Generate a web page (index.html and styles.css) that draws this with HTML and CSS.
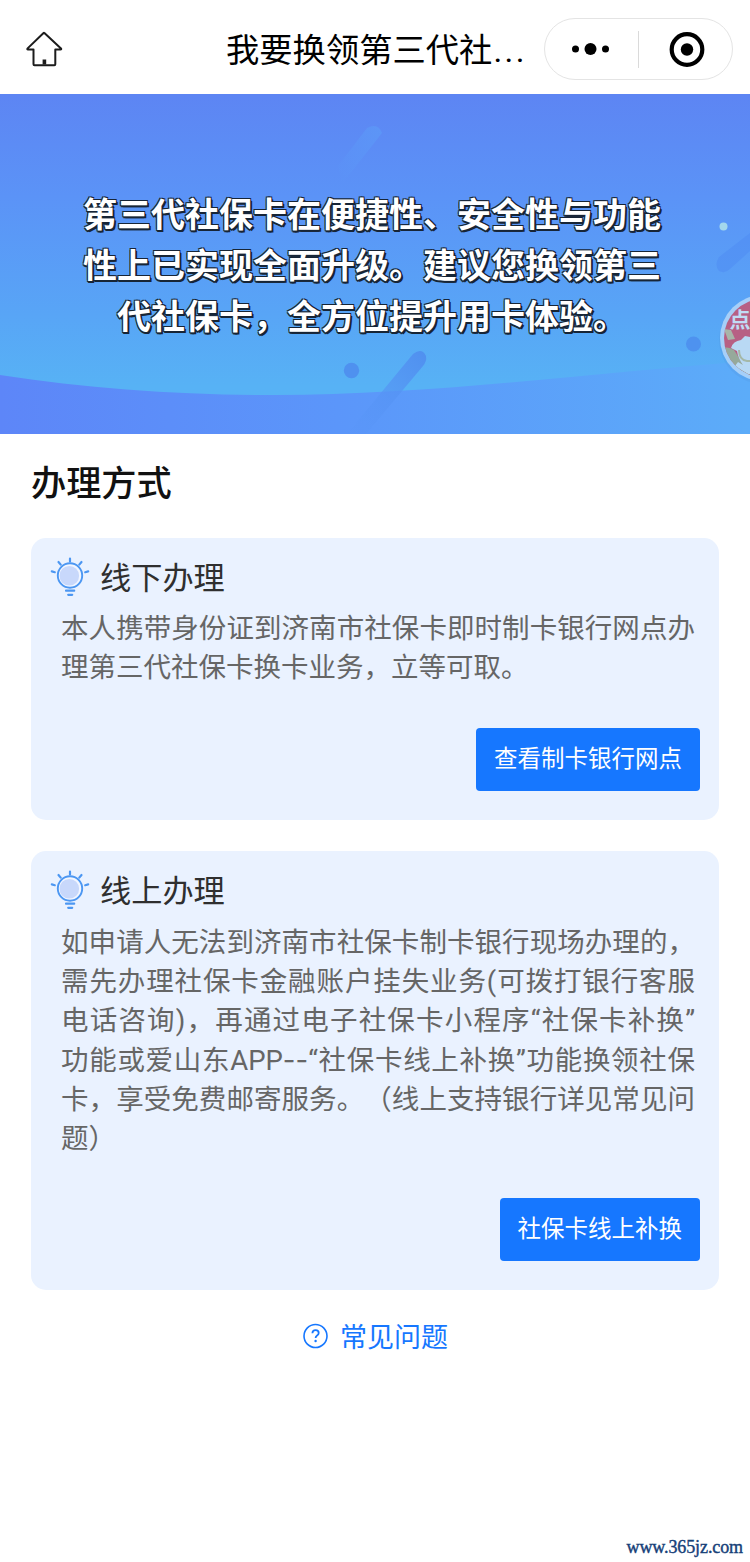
FILE: index.html
```html
<!DOCTYPE html>
<html lang="zh-CN">
<head>
<meta charset="utf-8">
<title>我要换领第三代社保卡</title>
<link rel="stylesheet" href="styles.css">
</head>
<body>
<svg class="defs" width="0" height="0" aria-hidden="true">
  <symbol id="bulb" viewBox="0 0 40 40">
    <circle cx="20" cy="18.500" r="12.200" fill="#f2f6ff" stroke="#4c97f2" stroke-width="1.900"/>
    <circle cx="19.300" cy="18.800" r="9.800" fill="#c8d8fb"/>
    <path d="M20 1.500v3M8.500 5l2.200 2.600M31.500 5l-2.200 2.600M1.800 14.400l3 .8M38.200 14.400l-3 .8M16 33.700h8.200M18.200 37.800h4" fill="none" stroke="#4c97f2" stroke-width="2.200" stroke-linecap="round"/>
  </symbol>
</svg>
<header class="navbar">
  <svg class="home" width="38" height="38" viewBox="0 0 38 38" fill="none" stroke="#1c1c1c" stroke-width="2" stroke-linejoin="round" stroke-linecap="round">
    <path d="M19.400 3L36 18.500c.5.6.2 1-.5 1h-5.200v14.800q0 1-1 1H9.500q-1 0-1-1V19.500H3c-.8 0-1-.5-.4-1.100L18.300 3.300q.6-.6 1.100-.3z"/>
    <path d="M19.400 29.500v5" stroke-width="3.600" stroke-linecap="butt"/>
  </svg>
  <h1 class="title">我要换领第三代社<span class="ellipsis">...</span></h1>
  <div class="capsule">
    <svg width="94" height="61" viewBox="0 0 94 61"><circle cx="30.500" cy="30" r="3.500"/><circle cx="45.500" cy="30" r="6"/><circle cx="60.500" cy="30" r="3.500"/></svg>
    <span class="divider"></span>
    <svg width="93" height="61" viewBox="0 0 93 61"><circle cx="48" cy="30.500" r="15.300" fill="none" stroke="#000" stroke-width="4.200"/><circle cx="48" cy="30.500" r="6.200"/></svg>
  </div>
</header>
<section class="banner">
  <svg class="art" width="750" height="340" viewBox="0 0 750 340">
    <defs>
      <linearGradient id="sky" x1="0" y1="0" x2="0" y2="1"><stop offset="0" stop-color="#5d85f3"/><stop offset=".3" stop-color="#5b93f7"/><stop offset=".65" stop-color="#58a5f6"/><stop offset=".86" stop-color="#57b2f5"/><stop offset="1" stop-color="#57b4f5"/></linearGradient>
      <linearGradient id="wave" x1="0" y1="0" x2="1" y2="0"><stop offset="0" stop-color="#5d86f8"/><stop offset=".45" stop-color="#5b96fa"/><stop offset="1" stop-color="#5cacf9"/></linearGradient>
      <linearGradient id="bar" x1="1" y1="0" x2="0" y2="1"><stop offset="0" stop-color="#5090ef"/><stop offset="1" stop-color="#5a96f9" stop-opacity=".3"/></linearGradient>
      <linearGradient id="glow" x1="1" y1="0" x2="0" y2="1"><stop offset="0" stop-color="#5ca4fa" stop-opacity=".45"/><stop offset="1" stop-color="#5ca4fa" stop-opacity="0"/></linearGradient>
    </defs>
    <rect width="750" height="340" fill="url(#sky)"/>
    <path d="M0 281C90 295 180 301 275 301C430 301 590 279 750 267V340H0z" fill="url(#wave)"/>
    <path d="M338 72L367 34Q378 28 382 39L342 90z" fill="url(#glow)"/>
    <path d="M347 340L413 260Q422 253 426 262Q427 267 423 272L366 340z" fill="url(#bar)"/>
    <path d="M750 139L719 163Q714 171 719 177Q725 180 730 175L750 157z" fill="#508ef3" opacity=".6"/>
    <circle cx="351.500" cy="276.500" r="7.700" fill="#4f91ef"/>
    <circle cx="693.500" cy="250" r="7.500" fill="#4e92ef"/>
    <circle cx="723.500" cy="132.500" r="4" fill="#a3d7ec"/>
  </svg>
  <p class="slogan">第三代社保卡在便捷性、安全性与功能<br>性上已实现全面升级。建议您换领第三<br>代社保卡，全方位提升用卡体验。</p>
  <svg class="float" width="36" height="96" viewBox="0 0 36 96">
    <defs><clipPath id="disc"><circle cx="49" cy="48" r="39"/></clipPath></defs>
    <circle cx="49" cy="50" r="44" fill="#4779bd" opacity=".1"/>
    <circle cx="49" cy="48" r="43" fill="#a6cff8"/>
    <g clip-path="url(#disc)">
      <rect width="90" height="96" fill="#b76084"/>
      <path d="M5 60q8-5 15 0l16 25H5z" fill="#96a99b"/>
      <path d="M10 39l7 1 4 9-7 1z" fill="#a8b5a8"/>
      <path d="M17 58q2-7 10-8l4-4 9 2v36h-6l-13-8 3-4 5 3q-5-7-6-14z" fill="#b9d9f4"/>
      <path d="M25 60q0 10 8 11h7" fill="none" stroke="#a5b8a8" stroke-width="2"/>
      <text class="float-text" x="15.500" y="37">点</text>
    </g>
  </svg>
</section>
<main class="content">
  <h2 class="heading">办理方式</h2>
  <section class="card offline">
    <h3 class="card-title"><svg width="40" height="40"><use href="#bulb"/></svg><span>线下办理</span></h3>
    <p class="text"><span class="line full">本人携带身份证到济南市社保卡即时制卡银行网点办</span><span class="line">理第三代社保卡换卡业务，立等可取。</span></p>
    <button class="button">查看制卡银行网点</button>
  </section>
  <section class="card online">
    <h3 class="card-title"><svg width="40" height="40"><use href="#bulb"/></svg><span>线上办理</span></h3>
    <p class="text"><span class="line full">如申请人无法到济南市社保卡制卡银行现场办理的，</span><span class="line full">需先办理社保卡金融账户挂失业务(可拨打银行客服</span><span class="line full">电话咨询)，再通过电子社保卡小程序“社保卡补换”</span><span class="line full">功能或爱山东APP<span class="dash">--</span>“社保卡线上补换”功能换领社保</span><span class="line full">卡，享受免费邮寄服务。（线上支持银行详见常见问</span><span class="line">题）</span></p>
    <button class="button">社保卡线上补换</button>
  </section>
  <a class="faq"><svg width="26" height="26" viewBox="0 0 26 26" fill="none" stroke="#1677ff" stroke-width="1.600"><circle cx="13.500" cy="13" r="11.500"/><path d="M10.400 10.300q.1-3.200 3.200-3.200t3.100 2.800q0 1.400-1.600 2.500-1.500 1-1.500 2.600" stroke-width="1.800"/><circle cx="13.600" cy="18" r="1.200" fill="#1677ff" stroke="none"/></svg><span>常见问题</span></a>
</main>
<footer class="watermark">www.365jz.com</footer>
</body>
</html>
```
FILE: styles.css
```css
* { box-sizing: border-box; }
body {
  margin: 0;
  width: 750px;
  height: 1562px;
  display: flex;
  flex-direction: column;
  overflow: hidden;
  background: #fff;
  font-family: Roboto, "Noto Sans CJK SC", sans-serif;
  text-spacing-trim: space-all;
}
h1, h2, h3, p { margin: 0; font-weight: 400; }
svg { display: block; flex: none; }
.defs { position: absolute; }
.navbar {
  height: 94px;
  flex: none;
  display: flex;
  align-items: center;
  padding: 4px 17px 0 25px;
}
.title {
  margin-left: 163px;
  width: 318px;
  padding-top: 3px;
  font-size: 33.300px;
  line-height: 48px;
  white-space: nowrap;
  color: #000;
}
.ellipsis { margin-left: 1px; letter-spacing: 2.400px; }
.capsule {
  width: 189px;
  height: 62px;
  border: 1px solid #e4e4e4;
  border-radius: 31px;
  display: flex;
  align-items: center;
}
.divider { width: 1px; height: 37px; background: #dadada; flex: none; }
.capsule svg { margin-right: -1px; }
.banner { position: relative; height: 340px; flex: none; overflow: hidden; padding-top: 93px; }
.art { position: absolute; left: 0; top: 0; }
.slogan {
  position: relative;
  width: 744px;
  text-align: center;
  font: 700 34px/51px "Noto Sans CJK SC", sans-serif;
  color: #fff;
  text-shadow: -1px -1px 0 #172536, 1px -1px 0 #172536, -1px 1px 0 #172536, 1px 1px 0 #172536, 2px 2px 0 #172536, 0 2px 0 #172536;
}
.float { position: absolute; right: 0; top: 196px; }
.float-text { font: 700 21px "Noto Sans CJK SC", sans-serif; fill: #c1dcf5; }
.content { padding: 0 31px; display: flex; flex-direction: column; }
.heading { padding-top: 25px; height: 104px; font-size: 35.200px; line-height: 50px; font-weight: 500; color: #111; }
.card {
  display: flex;
  flex-direction: column;
  padding: 19px 19px 29px;
  background: #eaf2ff;
  border-radius: 15px;
}
.offline { height: 282px; }
.online { height: 439px; margin-top: 31px; }
.card-title {
  display: flex;
  align-items: center;
  gap: 10px;
  height: 40px;
  font-size: 31.200px;
  line-height: 40px;
  color: #2f2f2f;
}
.card-title span, .faq span { padding-top: 3px; }
.text { margin: 12px 5px 0 11px; font-size: 27.500px; line-height: 39.200px; color: #666; }
.online .text { margin-top: 13px; }
.line { display: block; white-space: nowrap; }
.full { text-align: justify; text-align-last: justify; white-space: normal; }
.dash { font-family: Inter, sans-serif; }
.button {
  margin: auto 0 0 auto;
  height: 63px;
  padding: 0 18px 2px;
  border: 0;
  border-radius: 4px;
  background: #1677ff;
  color: #fff;
  font-family: inherit;
  font-size: 23.500px;
  line-height: 60px;
}
.faq {
  display: flex;
  justify-content: center;
  align-items: center;
  gap: 12px;
  margin-top: 26px;
  height: 40px;
  font-size: 27px;
  line-height: 40px;
  color: #1677ff;
}
.watermark {
  margin: auto 7px 3px auto;
  font: 400 18px/24px "Liberation Serif", serif;
  letter-spacing: -.1px;
  color: #164078;
  -webkit-text-stroke: .4px #164078;
}
```
